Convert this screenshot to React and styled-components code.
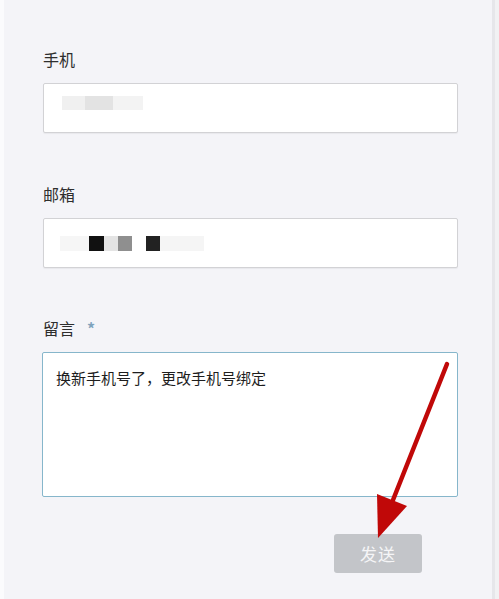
import React from "react";
import styled, { createGlobalStyle } from "styled-components";

const GlobalStyle = createGlobalStyle`
  html, body {
    margin: 0;
    padding: 0;
    background: #f0f0f3;
  }
  body {
    font-family: "Noto Sans CJK SC", "Noto Sans", sans-serif;
  }
`;

const Page = styled.div`
  position: relative;
  display: flex;
  width: 499px;
  height: 599px;
  overflow: hidden;
`;

const EdgeLeft = styled.div`
  width: 4px;
  background: #fbfbfd;
`;

const Panel = styled.div`
  flex: 1;
  background: #f4f4f8;
  border-right: 3px solid #e6e6ea;
  padding: 47px 0 0 38px;
  box-sizing: border-box;
`;

const EdgeRight = styled.div`
  width: 4px;
  background: #f1f1f3;
`;

const Form = styled.form`
  width: 416px;
  display: flex;
  flex-direction: column;
`;

const Field = styled.div`
  display: flex;
  flex-direction: column;
  margin-bottom: ${(p) => p.$gap}px;
`;

const Label = styled.label`
  font-size: 16px;
  line-height: 24px;
  color: #2e2e2e;
  margin-bottom: 12px;
  margin-left: 1px;
  display: flex;
  align-items: center;
  gap: 12px;
`;

const Star = styled.span`
  color: #7fa3bd;
  font-size: 16px;
  font-weight: bold;
`;

const Box = styled.div`
  height: 50px;
  margin-left: 1px;
  box-sizing: border-box;
  background: #fff;
  border: 1px solid #d2d2d5;
  border-radius: 2px;
  display: flex;
  align-items: center;
  padding-left: ${(p) => p.$pad}px;
  box-shadow: 0 1px 1px rgba(0, 0, 0, 0.05);
`;

const Mosaic = styled.div`
  display: flex;
  margin-top: ${(p) => p.$shift}px;
`;

const Cell = styled.span`
  display: block;
  width: ${(p) => p.$w}px;
  height: ${(p) => p.$h}px;
  background: ${(p) => p.$c};
`;

const TextArea = styled.div`
  height: 145px;
  box-sizing: border-box;
  background: #fff;
  border: 1px solid #86b6cb;
  border-radius: 2px;
  padding: 14px 13px;
  font-size: 15px;
  line-height: 22px;
  color: #1e1e1e;
`;

const Actions = styled.div`
  display: flex;
  justify-content: flex-end;
  padding-right: 36px;
  margin-top: 37px;
`;

const SendButton = styled.button`
  width: 88px;
  height: 39px;
  border: none;
  border-radius: 3px;
  background: #c3c5c9;
  color: #f5f5f7;
  font-family: inherit;
  font-size: 17px;
  letter-spacing: 1px;
`;

const Overlay = styled.svg`
  position: absolute;
  left: 0;
  top: 0;
  pointer-events: none;
`;

const phoneCells = [
  [23, "#f0f0f0"],
  [28, "#e3e3e3"],
  [30, "#f3f3f3"],
];

const mailCells = [
  [29, "#f6f6f6"],
  [15, "#111"],
  [14, "#e4e4e4"],
  [14, "#8f8f8f"],
  [14, "#fff"],
  [14, "#222"],
  [44, "#f5f5f5"],
];

function App() {
  return (
    <>
      <GlobalStyle />
      <Page>
        <EdgeLeft />
        <Panel>
          <Form>
            <Field $gap={49}>
              <Label>手机</Label>
              <Box $pad={18}>
                <Mosaic $shift={-10}>
                  {phoneCells.map(([w, c], i) => (
                    <Cell key={i} $w={w} $h={14} $c={c} />
                  ))}
                </Mosaic>
              </Box>
            </Field>
            <Field $gap={48}>
              <Label>邮箱</Label>
              <Box $pad={16}>
                <Mosaic $shift={1}>
                  {mailCells.map(([w, c], i) => (
                    <Cell key={i} $w={w} $h={15} $c={c} />
                  ))}
                </Mosaic>
              </Box>
            </Field>
            <Field $gap={0}>
              <Label>
                留言 <Star>*</Star>
              </Label>
              <TextArea>换新手机号了，更改手机号绑定</TextArea>
            </Field>
            <Actions>
              <SendButton type="button">发送</SendButton>
            </Actions>
          </Form>
        </Panel>
        <EdgeRight />
        <Overlay width="499" height="599" viewBox="0 0 499 599">
          <line
            x1="447"
            y1="364"
            x2="393"
            y2="500"
            stroke="#c00808"
            strokeWidth="4.5"
            strokeLinecap="round"
          />
          <polygon points="377,494 407,506 378,538" fill="#c00808" />
        </Overlay>
      </Page>
    </>
  );
}

export default App;
